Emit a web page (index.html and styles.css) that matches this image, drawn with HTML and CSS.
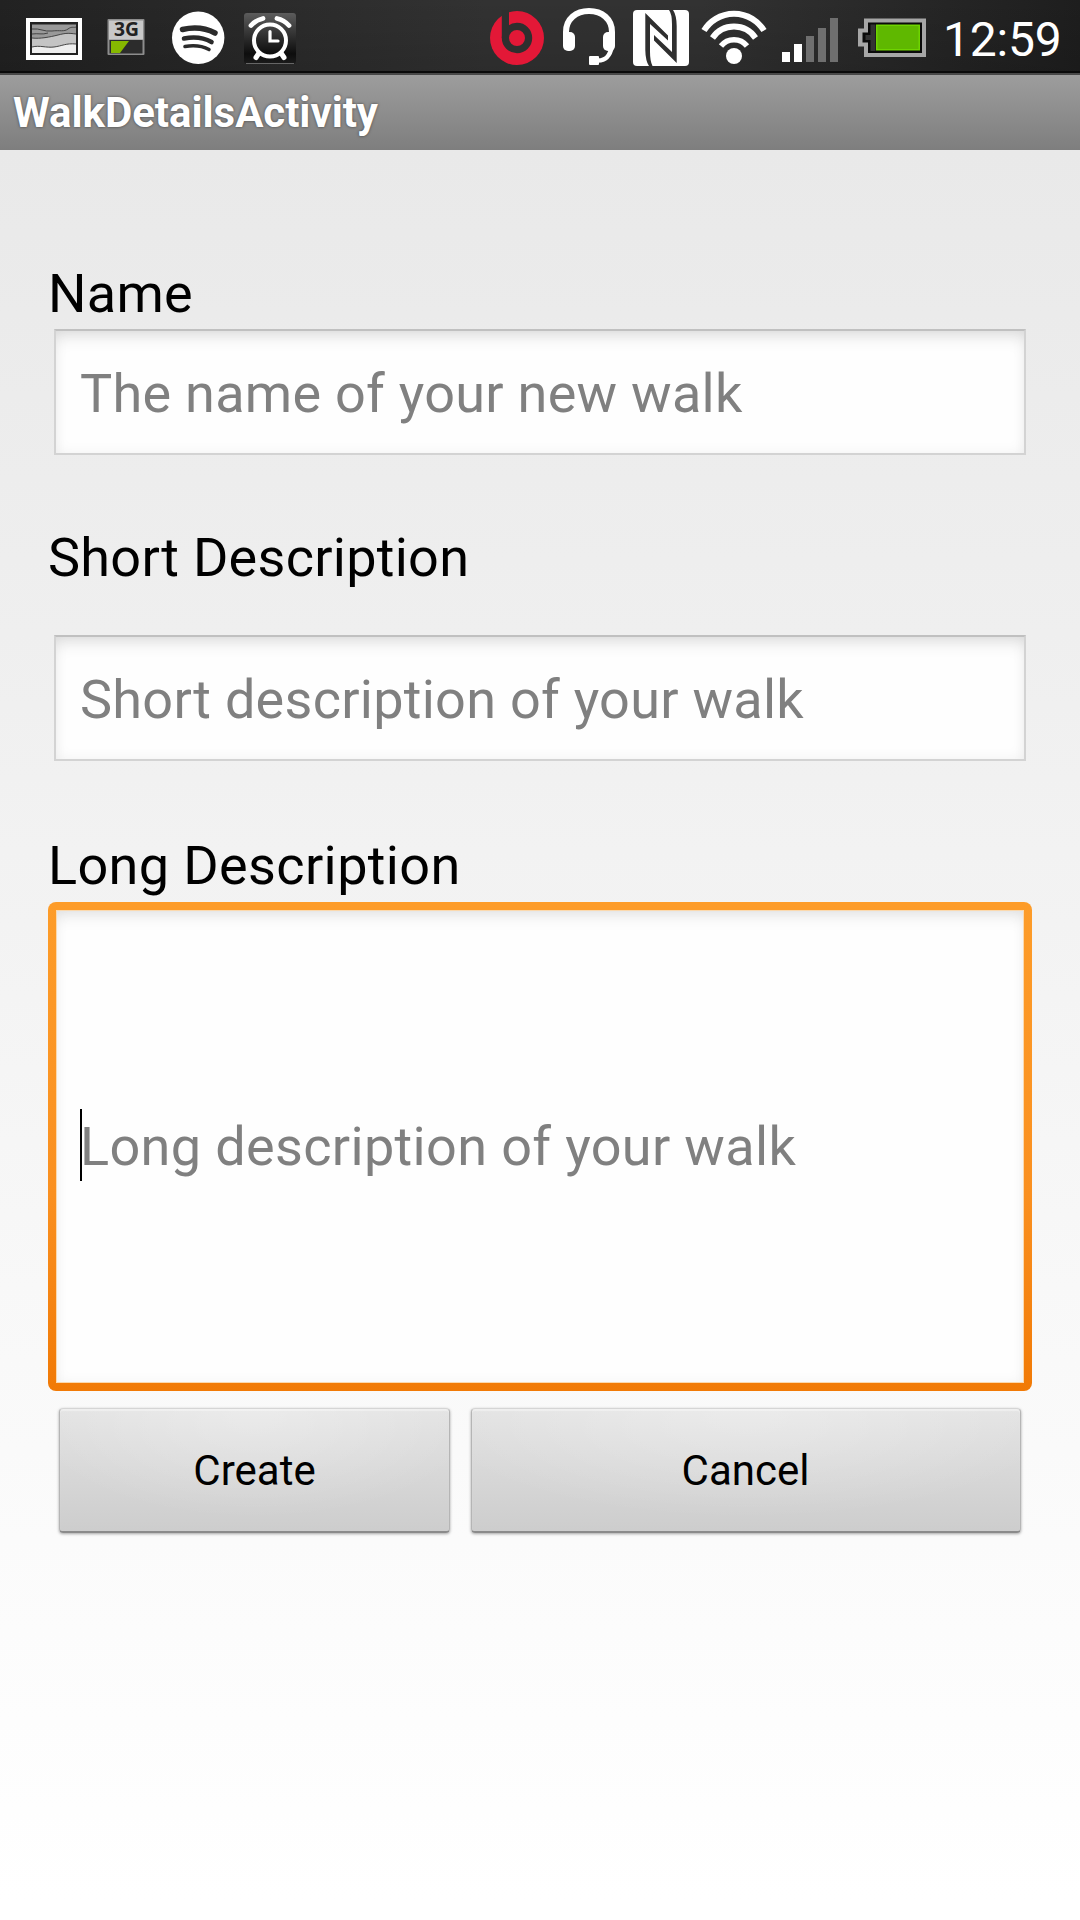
FILE: index.html
```html
<!DOCTYPE html>
<html lang="en">
<head>
<meta charset="utf-8">
<title>WalkDetailsActivity</title>
<link rel="stylesheet" href="styles.css">
</head>
<body>
<div class="screen">
  <header class="status-bar">
    <div class="status-group">
      <svg class="icon" width="76" height="71" viewBox="20 0 76 71">
        <rect x="26" y="18" width="56" height="42" fill="#fff"/>
        <rect x="30" y="22" width="48" height="33" fill="#222"/>
        <rect x="32" y="24.500" width="44" height="28.500" fill="#999"/>
        <path d="M32 38c8 1 18-1 26-3s10-2 18-1V53H32z" fill="#c4c4c4"/>
        <path d="M32 47c8-2 14 1 22 0s12-4 22-3V53H32z" fill="#eee"/>
        <path d="M32 29c8-1 12 3 20 2s12 1 16-2 6-1 8-2M32 34c6-1 10 1 16-1M32 38c8 1 18-1 26-3s10-2 18-1M32 47c8-2 14 1 22 0s12-4 22-3" fill="none" stroke="#444" stroke-width="1"/>
      </svg>
      <svg class="icon" width="64" height="71" viewBox="96 0 64 71">
        <rect x="107.500" y="19" width="37" height="36" rx="1" fill="#8d8d8d"/>
        <rect x="109" y="20.500" width="34" height="19" fill="#c8c8c8"/>
        <rect x="109.500" y="40" width="33" height="13.500" fill="#2c2c2c"/>
        <path d="M111 41h18l-9 12h-9z" fill="#86b800"/>
        <text class="badge-3g" x="114" y="36" textLength="25" lengthAdjust="spacingAndGlyphs">3G</text>
      </svg>
      <svg class="icon" width="76" height="71" viewBox="160 0 76 71">
        <circle cx="198.200" cy="37.800" r="26.200" fill="#fff"/>
        <g fill="none" stroke="#2b2b2b" stroke-linecap="round">
          <path d="M182.500 29.500c11-2.500 23-1.500 32.500 3.500" stroke-width="5.500"/>
          <path d="M184 38.500c10-2 19.500-1 27.500 3.500" stroke-width="4.600"/>
          <path d="M185 46.500c9-1.500 16.500-1 24 3" stroke-width="3.600"/>
        </g>
      </svg>
      <svg class="icon" width="66" height="71" viewBox="236 0 66 71">
        <defs>
          <linearGradient id="alarm" x1="0" y1="0" x2="0" y2="1"><stop offset="0" stop-color="#5c5c5c"/><stop offset=".8" stop-color="#0d0d0d"/><stop offset="1" stop-color="#1c1c1c"/></linearGradient>
        </defs>
        <rect x="244" y="13" width="52" height="51" rx="3" fill="url(#alarm)"/>
        <path d="M246 63.500h48" stroke="#666" stroke-width="1"/>
        <g fill="none" stroke="#fff" stroke-linecap="round">
          <circle cx="270" cy="40.500" r="16" stroke-width="4"/>
          <path d="M270 31.500V41h8" stroke-width="3.200"/>
          <path d="M259 53l-3 4.500M281 53l3 4.500" stroke-width="5"/>
          <path d="M251 25.500q5-5.500 12-7M289 25.500q-5-5.500-12-7" stroke-width="4.800"/>
        </g>
      </svg>
    </div>
    <div class="status-group">
      <svg class="icon" width="69" height="71" viewBox="485 0 69 71">
        <circle cx="517" cy="38" r="27" fill="#e31837"/>
        <circle cx="517" cy="38" r="11.600" fill="none" stroke="#2f2f2f" stroke-width="7.200"/>
        <rect x="501.800" y="10" width="7.200" height="28" fill="#2f2f2f"/>
      </svg>
      <svg class="icon" width="70" height="71" viewBox="554 0 70 71">
        <path d="M566 38v-6C566 19 576 11 589 11S612 19 612 32v6" fill="none" stroke="#fff" stroke-width="6"/>
        <rect x="563" y="32" width="12" height="19" rx="5" fill="#fff"/>
        <rect x="603" y="32" width="12" height="19" rx="5" fill="#fff"/>
        <path d="M612 46C610 56 606 60.500 598 60.500" fill="none" stroke="#fff" stroke-width="4.500"/>
        <rect x="589" y="56" width="10" height="9" rx="1" fill="#fff"/>
      </svg>
      <svg class="icon" width="72" height="71" viewBox="624 0 72 71">
        <rect x="633" y="10" width="56" height="56" rx="4" fill="#fff"/>
        <path d="M645.300 13L668 35.500V40.500L650 24V52Q650 61 652.500 66H649Q645.500 61 645.300 50z" fill="#2f2f2f"/>
        <path d="M676.700 63L654 40.500V35L672 52V24Q672 14 669 10H673Q676.500 15 676.700 26z" fill="#2f2f2f"/>
      </svg>
      <svg class="icon" width="78" height="71" viewBox="696 0 78 71">
        <g fill="none" stroke="#fff" stroke-width="6">
          <path d="M704 30.500A35.200 35.200 0 0 1 764 30.500"/>
          <path d="M712.500 38A26 26 0 0 1 755.500 38"/>
          <path d="M721 46A16.500 16.500 0 0 1 747 46" stroke-width="5.500"/>
        </g>
        <circle cx="734" cy="56" r="8" fill="#fff"/>
      </svg>
      <svg class="icon" width="72" height="71" viewBox="774 0 72 71">
        <path d="M782 52h8v10h-8zM794 44h8v18h-8z" fill="#fff"/>
        <path d="M806 36h8v26h-8zM818 28h8v34h-8zM830 18h8v44h-8z" fill="#6f6f6f"/>
      </svg>
      <svg class="icon" width="94" height="71" viewBox="846 0 94 71">
        <path d="M864 18.500h62V57h-62V46.500h-6V28.500h6z" fill="#a6a6a6"/>
        <path d="M868 22.500h54V53h-54V42.500h-5.500V32.500h5.500z" fill="#0a0a0a"/>
        <path d="M870.500 24.500h5V51h-5v-11h-5v-5h5z" fill="#333"/>
        <rect x="876" y="24.500" width="44" height="26" fill="#6fd400"/>
        <rect x="877.500" y="26" width="41" height="23" fill="#5fb800"/>
      </svg>
      <span class="clock">12:59</span>
    </div>
  </header>
  <div class="title-bar"><h1 class="title">WalkDetailsActivity</h1></div>
  <main class="form">
    <div class="label label-name">Name</div>
    <div class="field field-name" role="textbox"><span class="hint">The name of your new walk</span></div>
    <div class="label label-short">Short Description</div>
    <div class="field field-short" role="textbox"><span class="hint">Short description of your walk</span></div>
    <div class="label label-long">Long Description</div>
    <div class="focus-ring">
      <div class="area" role="textbox"><span class="caret"></span><span class="hint hint-long">Long description of your walk</span></div>
    </div>
    <div class="actions">
      <button class="button create">Create</button>
      <button class="button cancel">Cancel</button>
    </div>
  </main>
</div>
</body>
</html>
```

FILE: styles.css
```css
* { box-sizing: border-box; }

body {
  margin: 0;
  font-family: Roboto, "Liberation Sans", sans-serif;
}

.screen {
  width: 1080px;
  height: 1920px;
  overflow: hidden;
  display: flex;
  flex-direction: column;
  background: linear-gradient(#e9e9e9 150px, #eeeeee 560px, #f9f9f9 1360px, #fff 1900px);
}

.status-bar {
  height: 75px;
  display: flex;
  justify-content: space-between;
  align-items: flex-start;
  padding-left: 20px;
  border-bottom: 2px solid #484848;
  background:
    linear-gradient(transparent 71px, #0a0a0a 71px),
    linear-gradient(rgba(0, 0, 0, 0), rgba(0, 0, 0, .12)),
    linear-gradient(90deg, #222, #323232 45%, #323232 65%, #1e1e1e);
}

.status-group { display: flex; }
.icon { display: block; flex: none; }

.badge-3g {
  font: bold 19px "Open Sans", sans-serif;
  fill: #222;
}

.clock {
  width: 140px;
  padding-left: 3px;
  font-size: 48px;
  letter-spacing: -.2px;
  line-height: 79px;
  height: 71px;
  color: #fff;
  white-space: nowrap;
}

.title-bar {
  height: 75px;
  padding-left: 13px;
  background: linear-gradient(#9d9d9d, #7e7e7e);
}

.title {
  margin: 0;
  font-size: 42px;
  line-height: 76px;
  letter-spacing: -.04px;
  font-weight: 700;
  color: #fff;
  text-shadow: 0 0 3px rgba(0, 0, 0, .55);
}

.form {
  padding: 112px 48px 0;
  display: flex;
  flex-direction: column;
}

.label, .hint {
  font-size: 54px;
  line-height: 64px;
  letter-spacing: .27px;
  white-space: nowrap;
}

.label { color: #000; }
.label-short { margin-top: 71px; }
.label-long { margin-top: 73px; letter-spacing: .37px; }
.hint { color: #808080; }
.hint-long { letter-spacing: .35px; }

.field {
  height: 126px;
  margin: 3px 6px 0;
  padding: 3px 0 0 24px;
  display: flex;
  align-items: center;
  background: #fefefe;
  border: 2px solid #d3d3d3;
  border-top-color: #c0c0c0;
  box-shadow: inset 0 12px 18px -8px rgba(0, 0, 0, .13), inset 0 0 14px rgba(0, 0, 0, .05);
}
.field-short { margin-top: 45px; }

.focus-ring {
  height: 489px;
  margin-top: 4px;
  padding: 8px;
  border-radius: 8px;
  background: linear-gradient(#fd9c29, #fa9020 60%, #f17a06);
}

.area {
  height: 100%;
  padding: 1px 0 0 24px;
  display: flex;
  align-items: center;
  background: #fefefe;
  box-shadow: inset 0 0 0 1px #fbd9ae, inset 0 12px 18px -8px rgba(0, 0, 0, .11), inset 0 0 14px rgba(0, 0, 0, .05);
}

.caret {
  width: 2px;
  height: 72px;
  margin: 0 -2px 4px 0;
  background: #000;
}

.actions {
  display: flex;
  gap: 21px;
  padding: 17px 11px 0;
}

.button {
  height: 125px;
  border: 1px solid #b5b5b5;
  border-top-color: #d5d5d5;
  border-bottom: 2px solid #8b8b8b;
  border-radius: 4px;
  padding: 1px 0 0;
  font: 42px/50px Roboto, "Liberation Sans", sans-serif;
  color: #000;
  background:
    radial-gradient(ellipse 60% 90% at 50% 0, rgba(255, 255, 255, .3), transparent),
    linear-gradient(#e3e3e3, #cdcdcd);
  box-shadow: 0 1px 3px rgba(0, 0, 0, .35), inset 0 2px 1px rgba(255, 255, 255, .4);
}
.create { width: 391px; }
.cancel { flex: 1; padding-right: 1px; }
```
